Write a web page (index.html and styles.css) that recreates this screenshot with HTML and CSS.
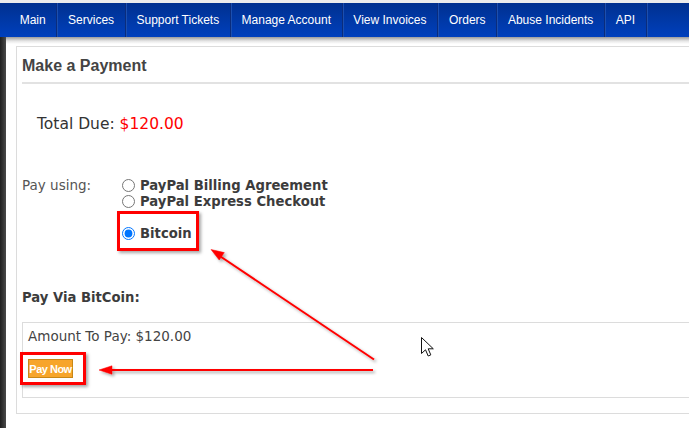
FILE: index.html
```html
<!DOCTYPE html>
<html lang="en">
<head>
<meta charset="utf-8">
<title>Make a Payment</title>
<link rel="stylesheet" href="styles.css">
</head>
<body>
<div class="topbar"></div>
<nav class="nav">
  <a class="nav-item">Main</a>
  <a class="nav-item">Services</a>
  <a class="nav-item">Support Tickets</a>
  <a class="nav-item">Manage Account</a>
  <a class="nav-item">View Invoices</a>
  <a class="nav-item">Orders</a>
  <a class="nav-item">Abuse Incidents</a>
  <a class="nav-item">API</a>
</nav>
<div class="layout">
  <div class="sidebar"></div>
  <main class="main">
    <section class="panel">
      <h2 class="panel-title">Make a Payment</h2>
      <div class="total"><span class="total-label">Total Due:</span> <span class="total-amount">$120.00</span></div>
      <div class="pay-using">
        <div class="pay-label">Pay using:</div>
        <div class="options">
          <label class="opt"><input class="radio" type="radio" name="method"><span>PayPal Billing Agreement</span></label>
          <label class="opt"><input class="radio" type="radio" name="method"><span>PayPal Express Checkout</span></label>
          <label class="opt opt-btc"><input class="radio" type="radio" name="method" checked><span>Bitcoin</span></label>
        </div>
      </div>
      <h3 class="via">Pay Via BitCoin:</h3>
      <div class="paybox">
        <div class="amount">Amount To Pay: $120.00</div>
        <button class="paynow" type="button">Pay Now</button>
      </div>
    </section>
  </main>
</div>

<div class="annot annot-bitcoin"></div>
<div class="annot annot-paynow"></div>
<svg class="arrows" width="689" height="428" viewBox="0 0 689 428">
  <defs>
    <filter id="sh" x="-10%" y="-10%" width="130%" height="130%">
      <feDropShadow dx="2" dy="2" stdDeviation="1.5" flood-color="#000" flood-opacity="0.35"/>
    </filter>
  </defs>
  <g filter="url(#sh)" fill="#ff0000" stroke="#ff0000">
    <line x1="374" y1="359.5" x2="219" y2="255.5" stroke-width="2"/>
    <polygon points="211,249.5 224.3,252.6 219.2,260" stroke-width="0.5"/>
    <line x1="373" y1="370" x2="110" y2="370" stroke-width="2"/>
    <polygon points="99,370 112,365.8 112,374.2" stroke-width="0.5"/>
  </g>
</svg>
<svg class="cursor" width="14" height="21" viewBox="0 0 14 21">
  <path d="M0.5 0.5 L0.5 16.5 L4.5 12.8 L7.2 19 L9.8 17.9 L7.2 11.8 L12.3 11.8 Z" fill="#fff" stroke="#111" stroke-width="1" stroke-linejoin="miter"/>
</svg>
</body>
</html>
```

FILE: styles.css
```css
html, body {
  margin: 0;
  padding: 0;
}
body {
  width: 689px;
  height: 428px;
  overflow: hidden;
  position: relative;
  background: #fff;
  font-family: "DejaVu Sans", Verdana, sans-serif;
  font-size: 13.5px;
  color: #444;
}
.topbar {
  height: 3px;
  background: #ececec;
}
.nav {
  display: flex;
  height: 34px;
  padding-left: 9px;
  background: linear-gradient(#00308f, #0040bd);
}
.nav-item {
  display: flex;
  align-items: center;
  padding: 0 10.7px;
  border-right: 1px solid #0a2c7c;
  box-shadow: 1px 0 0 #1b4fb0;
  color: #fff;
  font-family: "Liberation Sans", Arial, sans-serif;
  font-size: 12px;
  text-decoration: none;
  white-space: nowrap;
}
.layout {
  display: flex;
  height: 391px;
}
.sidebar {
  width: 6px;
  flex: none;
  background: linear-gradient(to right, #1e1e1e, #4a4a4a);
}
.main {
  flex: 1;
  min-width: 0;
  background: linear-gradient(#9c9c9c, #e6e6e6 4px, #fff 7px);
  padding: 9px 0 0 10px;
}
.panel {
  width: 720px;
  border: 1px solid #dcdcdc;
  padding: 0 5px 15px;
  box-sizing: border-box;
}
.panel-title {
  margin: 9px 0 0;
  padding-bottom: 6px;
  border-bottom: 2px solid #e2e2e2;
  font-family: "Liberation Sans", Arial, sans-serif;
  font-size: 16px;
  line-height: 20px;
  font-weight: bold;
  color: #444;
}
.total {
  margin-top: 31px;
  padding-left: 15px;
  font-size: 15.5px;
  line-height: 18px;
}
.total-label {
  color: #333;
}
.total-amount {
  color: #f00;
}
.pay-using {
  display: flex;
  margin-top: 44px;
}
.pay-label {
  width: 100px;
  flex: none;
  line-height: 16px;
  color: #555;
}
.options {
  display: flex;
  flex-direction: column;
}
.opt {
  display: flex;
  align-items: center;
  height: 16px;
  font-size: 13.2px;
  font-weight: bold;
  color: #3c3c3c;
}
.opt-btc {
  margin-top: 16px;
}
.radio {
  width: 13px;
  height: 13px;
  margin: 0 5px 0 0;
}
.via {
  margin: 49px 0 0;
  font-size: 13.2px;
  line-height: 16px;
  font-weight: bold;
  color: #3c3c3c;
}
.paybox {
  margin-top: 16px;
  border: 1px solid #dcdcdc;
  padding: 5px 5px 19px;
}
.amount {
  line-height: 16px;
  color: #444;
}
.paynow {
  display: block;
  margin-top: 15px;
  width: 45px;
  height: 19px;
  padding: 0;
  border: 1px solid #c88716;
  background: #f7a52b;
  color: #fff;
  font-family: "Liberation Sans", Arial, sans-serif;
  font-size: 11px;
  font-weight: bold;
  letter-spacing: -0.5px;
  white-space: nowrap;
  text-align: center;
}
.annot {
  position: absolute;
  border: 3px solid #ff0000;
  box-sizing: border-box;
  box-shadow: 2px 2px 3px rgba(0, 0, 0, 0.35);
}
.annot-bitcoin {
  left: 117px;
  top: 211px;
  width: 82px;
  height: 40px;
}
.annot-paynow {
  left: 20px;
  top: 352px;
  width: 66px;
  height: 33px;
}
.arrows {
  position: absolute;
  left: 0;
  top: 0;
  pointer-events: none;
}
.cursor {
  position: absolute;
  left: 421px;
  top: 337px;
  pointer-events: none;
}
```
